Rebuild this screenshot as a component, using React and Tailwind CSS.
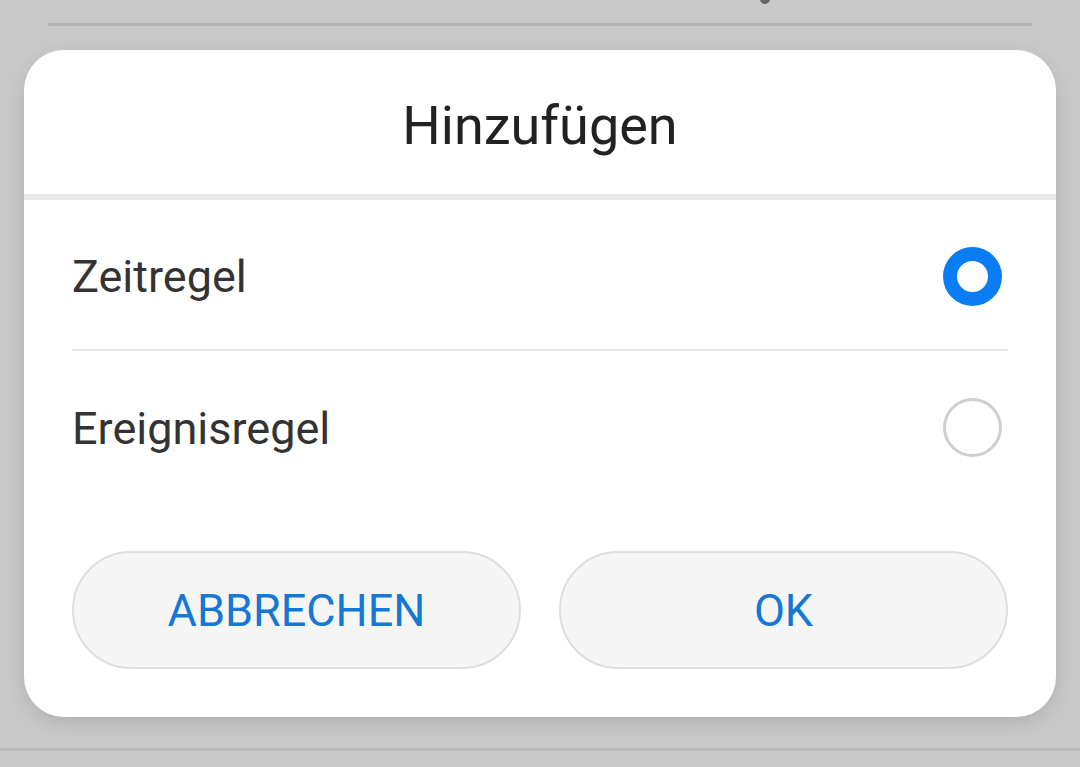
export default function App() {
  return (
    <div className="relative h-[767px] w-[1080px] overflow-hidden bg-[#c9c9c9] font-['Roboto',sans-serif]">
      {/* background list behind the dialog */}
      <div className="absolute left-[760px] top-[-6px] h-[10px] w-[10px] rounded-full bg-[#666]" />
      <div className="mx-[48px] mt-[23px] h-[3px] bg-[#b5b5b5]" />

      <div className="mx-[24px] mt-[24px] h-[667px] rounded-[40px] bg-white shadow-[0_6px_18px_rgba(0,0,0,0.12)]">
        <div className="flex h-[144px] items-center justify-center pt-[6px] text-[54px] text-[#222]">
          Hinzufügen
        </div>
        <div className="h-[6px] bg-[#e9e9e9]" />

        <div className="px-[48px]">
          <div className="flex h-[151px] items-center justify-between border-b-2 border-[#e6e6e6] pt-[4px]">
            <span className="text-[45px] text-[#333]">Zeitregel</span>
            <span className="mr-[6px] h-[59px] w-[59px] rounded-full border-[14px] border-[#0a7df4] bg-white" />
          </div>
          <div className="flex h-[152px] items-center justify-between">
            <span className="pt-[4px] text-[45px] text-[#333]">Ereignisregel</span>
            <span className="mr-[6px] h-[59px] w-[59px] rounded-full border-[3px] border-[#cfcfcf] bg-white" />
          </div>

          <div className="mt-[48px] flex gap-[38px]">
            <button className="h-[118px] flex-1 rounded-full border-2 border-[#dedede] bg-[#f5f5f5] pt-[2px] text-[45px] text-[#1478d4]">
              ABBRECHEN
            </button>
            <button className="h-[118px] flex-1 rounded-full border-2 border-[#dedede] bg-[#f5f5f5] pt-[2px] text-[45px] text-[#1478d4]">
              OK
            </button>
          </div>
        </div>
      </div>

      <div className="mt-[31px] h-[3px] bg-[#b8b8b8]" />
    </div>
  );
}
